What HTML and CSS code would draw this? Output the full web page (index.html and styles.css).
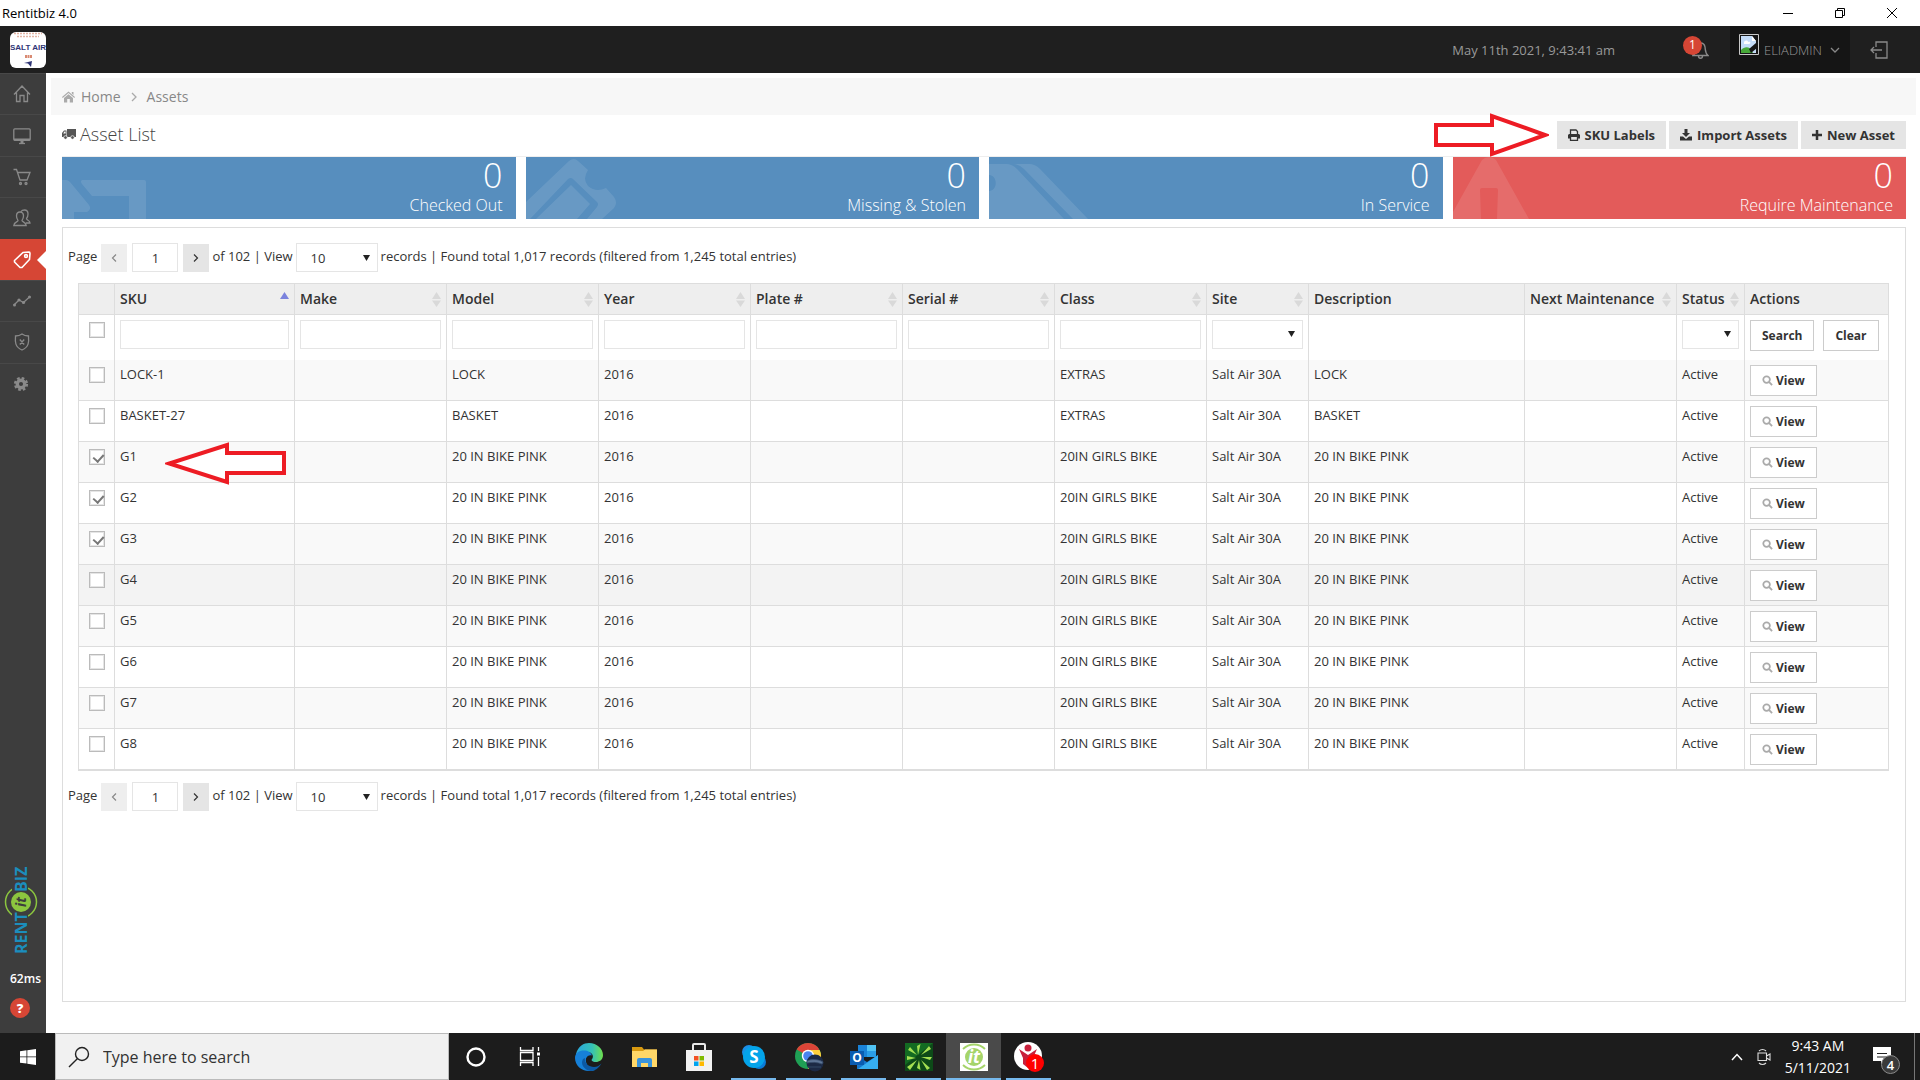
FILE: index.html
```html
<!DOCTYPE html>
<html lang="en">
<head>
  <meta charset="UTF-8">
  <title>Rentitbiz 4.0</title>
  <link rel="stylesheet" href="styles.css">
</head>
<body>
  <svg class="defs" aria-hidden="true">
    <symbol id="i-search" viewBox="0 0 12 12"><circle cx="5" cy="5" r="3.6" fill="none" stroke="#aaa" stroke-width="1.9"/><path d="M7.6 7.6L11 11" stroke="#aaa" stroke-width="2"/></symbol>
    <symbol id="i-sort" viewBox="0 0 9 15"><path d="M4.5 0L9 7H0zM4.5 15L9 8.400H0z" fill="#d9d9d9"/></symbol>
    <symbol id="i-left" viewBox="0 0 8 10"><path d="M6 1.500L2.500 5 6 8.500" fill="none" stroke="#888" stroke-width="1.200"/></symbol>
    <symbol id="i-right" viewBox="0 0 8 10"><path d="M2 1.500L5.500 5 2 8.500" fill="none" stroke="#333" stroke-width="1.200"/></symbol>
  </svg>

  <div class="titlebar">
    <span>Rentitbiz 4.0</span>
    <div class="window-buttons">
      <button aria-label="Minimize"><svg width="12" height="12"><path d="M1 6.500H11" stroke="#000"/></svg></button>
      <button aria-label="Restore"><svg width="12" height="12"><path d="M1.500 3.500H8.500V10.500H1.500zM3.500 3.500V1.500H10.500V8.500H8.500" fill="none" stroke="#000"/></svg></button>
      <button aria-label="Close"><svg width="12" height="12"><path d="M1 1L11 11M11 1L1 11" stroke="#000"/></svg></button>
    </div>
  </div>

  <header class="topbar">
    <a href="#" class="brand" aria-label="Salt Air">
      <svg width="36" height="36" viewBox="0 0 36 36">
        <rect width="36" height="36" rx="6" fill="#fff"/>
        <path d="M4 1.500H32M7 4.500H29" stroke="#e3b4a4" stroke-width="1.500" stroke-dasharray="2 1"/>
        <text x="18" y="18" class="brand-text">SALT AIR</text>
        <path d="M15 24.500H22" stroke="#d98a72" stroke-width="3" stroke-dasharray="2 .5"/>
        <path d="M14 31L22 29 21 35 18 31.500z" fill="#2f3575"/>
      </svg>
    </a>
    <span class="clock">May 11th 2021, 9:43:41 am</span>
    <button class="bell" aria-label="Notifications">
      <svg width="17" height="18" viewBox="0 0 17 18" fill="none" stroke="#8a8a8a" stroke-width="1.400"><path d="M1 14.500C4 12 3.500 9 4 6 4.500 3 6 2 8.500 2S12.500 3 13 6C13.500 9 13 12 16 14.500zM6.500 15c0 3 4 3 4 0"/></svg>
      <span class="badge">1</span>
    </button>
    <button class="user">
      <svg class="avatar" width="20" height="21" viewBox="0 0 20 21"><path d="M.5.5H19.500V20.500H.5z" fill="#151515" stroke="#c8c8c8"/><path d="M2 2H13L17 7V19H2z" fill="#c4dcf8"/><path d="M13 2V7H17z" fill="#fff"/><path d="M5 9c0-3 4-3 4-1 3-1 3 2 1 2H5z" fill="#fff"/><path d="M2 19V16C6 12 11 12 14 19z" fill="#46a838"/><path d="M17 9L10 15 12 19 18 14z" fill="#151515"/></svg>
      <span>ELIADMIN</span>
      <svg width="10" height="6" viewBox="0 0 10 6"><path d="M1 1L5 5 9 1" fill="none" stroke="#888" stroke-width="1.300"/></svg>
    </button>
    <button class="logout" aria-label="Log out">
      <svg width="18" height="18" viewBox="0 0 18 18" fill="none" stroke="#8a8a8a" stroke-width="1.300"><path d="M6 6V1H17V17H6V12M12 9H1M4 6L1 9 4 12"/></svg>
    </button>
  </header>

  <div class="layout">
    <aside class="sidebar">
      <nav class="menu">
        <a href="#" aria-label="Home"><svg width="18" height="18" viewBox="0 0 18 18"><path d="M1 9.500L9 1 17 9.500M3.500 7.500V16.500H7V10.500H11V16.500H14.500V7.500"/></svg></a>
        <a href="#" aria-label="Dashboard"><svg width="18" height="18" viewBox="0 0 18 18"><rect x=".8" y="1.800" width="16.400" height="11.500" rx="1"/><path d="M1 11.500H17V13.500H1zM7.500 13.500H10.500V16.500H7.500z" fill="#8a8a8a" stroke="none"/><path d="M6 16.500H12"/></svg></a>
        <a href="#" aria-label="Orders"><svg width="18" height="18" viewBox="0 0 18 18"><path d="M.5 1.500H3.500L7 12H14L17 4.500H4.500"/><circle cx="7.500" cy="15.500" r="1"/><circle cx="13" cy="15.500" r="1"/></svg></a>
        <a href="#" aria-label="Customers"><svg width="18" height="18" viewBox="0 0 18 18"><path d="M7 3C4 3 3.500 5 3.500 7S4 10 5 11.500C5 13 1 13 .8 16.500H13.200C13 13 9 13 9 11.500 10 10 10.500 9 10.500 7S10 3 7 3zM8 2.500C9 1 10.500 1 11.500 1c3 0 3.500 2 3.500 4s-.5 3.500-1.500 4.500c0 2 3.500 1.500 3.500 4.500H13"/></svg></a>
        <a href="#" class="active" aria-label="Assets"><svg width="18" height="18" viewBox="0 0 18 18"><path d="M10 1.500L16 1C17 1 17 1.500 17 2.500L16.500 8.500 9 16.500H7L1.500 11V9.500z"/><circle cx="13" cy="5" r="1.400"/></svg></a>
        <a href="#" aria-label="Reports"><svg width="18" height="18" viewBox="0 0 18 18"><path d="M1 13L6 8 10.500 10.500 17 4.500"/><g fill="#8a8a8a" stroke="none"><circle cx="1.500" cy="13" r="1.500"/><circle cx="6" cy="8" r="1.600"/><circle cx="10.500" cy="10.500" r="1.600"/><circle cx="16.500" cy="5" r="1.500"/></g></svg></a>
        <a href="#" aria-label="Security"><svg width="18" height="18" viewBox="0 0 18 18"><path d="M9 1C7 2.500 4.500 3 2.500 3C2 9 2 14 9 17C16 14 16 9 15.500 3 13.500 3 11 2.500 9 1zM6.800 6.500L11.200 11.500M11.200 6.500L6.800 11.500"/></svg></a>
        <a href="#" aria-label="Settings"><svg width="16" height="16" viewBox="0 0 18 18"><circle cx="9" cy="9" r="4.200" stroke-width="3.800"/><circle cx="9" cy="9" r="6.700" stroke-width="2.600" stroke-dasharray="2.960 2.300"/></svg></a>
      </nav>
      <div class="sidebar-foot">
        <svg width="36" height="90" viewBox="0 0 36 90">
          <circle cx="17" cy="37" r="15.500" fill="none" stroke="#8cc63f" stroke-width="1.500"/>
          <path d="M8 0H24V90H8z" fill="#3d3d3d"/>
          <text class="logo-word" transform="translate(23 89) rotate(-90)">RENT</text>
          <text class="logo-word" transform="translate(23 27) rotate(-90)">BIZ</text>
          <circle cx="17" cy="37" r="10" fill="#8cc63f"/>
          <text class="logo-it" transform="translate(22 42) rotate(-90)">it</text>
        </svg>
        <span class="ping">62ms</span>
        <button class="help" aria-label="Help">?</button>
      </div>
    </aside>

    <main class="content">
      <nav class="breadcrumb">
        <svg width="13" height="12" viewBox="0 0 13 12" fill="#aaa"><path d="M6.500.5L13 6 12.300 7 6.500 2 .7 7 0 6zM9.800 1H11.500V4L9.800 2.500zM2 7L6.500 3.200 11 7V11.500H7.800V8H5.200V11.500H2z"/></svg>
        <a href="#">Home</a>
        <svg class="crumb-sep" width="6" height="10" viewBox="0 0 6 10"><path d="M1 1L5 5 1 9" fill="none" stroke="#aaa" stroke-width="1.300"/></svg>
        <a href="#">Assets</a>
      </nav>

      <div class="page-head">
        <h1>
          <svg width="14" height="12" viewBox="0 0 14 12" fill="#555"><path d="M5 1H14V9H5zM0 9V5L2 2.500H4.500V9z"/><circle cx="3.500" cy="9.500" r="1.800" stroke="#fff" stroke-width=".7"/><circle cx="10.500" cy="9.500" r="1.800" stroke="#fff" stroke-width=".7"/><path d="M1.200 5.500L2.500 3.600H3.600V5.500z" fill="#fff"/></svg>
          Asset List
        </h1>
        <div class="head-actions">
          <button class="btn-gray"><svg width="12" height="12" viewBox="0 0 12 12"><path d="M2.500 5V1H8L9.500 2.500V5" fill="none" stroke="#333" stroke-width="1.300"/><path d="M1 5H11L12 6V9.500H10V8H2V9.500H0V6z" fill="#333"/><path d="M2.500 8V11.300H9.500V8" fill="none" stroke="#333" stroke-width="1.300"/></svg> SKU Labels</button>
          <button class="btn-gray"><svg width="12" height="12" viewBox="0 0 12 12" fill="#333"><path d="M4.500 0H7.500V4H10L6 8 2 4H4.500zM0 7.500H3L6 10 9 7.500H12V11.500H0z"/></svg> Import Assets</button>
          <button class="btn-gray"><svg width="10" height="12" viewBox="0 0 10 12"><path d="M5 1V11M0 6H10" stroke="#333" stroke-width="2.500"/></svg> New Asset</button>
        </div>
      </div>

      <section class="tiles">
        <div class="tile">
          <svg width="100" height="62"><path d="M0 23H4Q6 23 8 25L27 48Q30 52 25 55H12V62H0zM20 23H82Q84 23 84 25V62H67V39H30L20 27Q18 24 20 23z"/></svg>
          <div class="number">0</div><div class="desc">Checked Out</div>
        </div>
        <div class="tile">
          <svg width="100" height="62"><path fill-rule="evenodd" d="M0 45L43 4Q48 0 52 4L62 13Q56 22 62 29 70 36 80 31L88 40Q92 46 88 51L76 62H0zM4 62H10L45 28 64 47 51 62H61L71 50Q73 47 71 45L47 22Q45 20 42 22z"/></svg>
          <div class="number">0</div><div class="desc">Missing &amp; Stolen</div>
        </div>
        <div class="tile">
          <svg width="100" height="62"><path d="M0 7H17Q23 7 28 12L75 62H0V34C9 34 9 18 0 18zM24 7H40Q46 7 51 12L99 62H84L35 12Q30 7 24 7z"/></svg>
          <div class="number">0</div><div class="desc">In Service</div>
        </div>
        <div class="tile tile-red">
          <svg width="100" height="62"><path fill-rule="evenodd" d="M0 55L29 3Q32 0 36 0T43 3L76 62H0zM29 31Q27 31 27 33L28 62H44L45 33Q45 31 43 31z"/></svg>
          <div class="number">0</div><div class="desc">Require Maintenance</div>
        </div>
      </section>

      <section class="panel">
        <div class="pager">
          <span>Page</span>
          <button class="page-btn prev" disabled aria-label="Previous page"><svg width="8" height="10"><use href="#i-left"/></svg></button>
          <input class="page-no" type="text" value="1" aria-label="Page number">
          <button class="page-btn" aria-label="Next page"><svg width="8" height="10"><use href="#i-right"/></svg></button>
          <span>of 102 | View</span>
          <select class="page-size" aria-label="Records per page"><option>10</option><option>20</option><option>50</option></select>
          <span>records | Found total 1,017 records (filtered from 1,245 total entries)</span>
        </div>

        <table class="grid">
          <colgroup>
            <col class="c-check"><col class="c-sku"><col class="c-std"><col class="c-std"><col class="c-std"><col class="c-std"><col class="c-std"><col class="c-std"><col class="c-site"><col><col class="c-std"><col class="c-status"><col class="c-actions">
          </colgroup>
          <thead>
            <tr>
              <th></th>
              <th><div>SKU <svg width="9" height="15" viewBox="0 0 9 15"><path d="M4.500 0L9 7H0z" fill="#7b83dd"/></svg></div></th>
              <th><div>Make <svg width="9" height="15"><use href="#i-sort"/></svg></div></th>
              <th><div>Model <svg width="9" height="15"><use href="#i-sort"/></svg></div></th>
              <th><div>Year <svg width="9" height="15"><use href="#i-sort"/></svg></div></th>
              <th><div>Plate # <svg width="9" height="15"><use href="#i-sort"/></svg></div></th>
              <th><div>Serial # <svg width="9" height="15"><use href="#i-sort"/></svg></div></th>
              <th><div>Class <svg width="9" height="15"><use href="#i-sort"/></svg></div></th>
              <th><div>Site <svg width="9" height="15"><use href="#i-sort"/></svg></div></th>
              <th><div>Description</div></th>
              <th><div>Next Maintenance <svg width="9" height="15"><use href="#i-sort"/></svg></div></th>
              <th><div>Status <svg width="9" height="15"><use href="#i-sort"/></svg></div></th>
              <th><div>Actions</div></th>
            </tr>
            <tr class="filters">
              <td><input type="checkbox" aria-label="Select all"></td>
              <td><input type="text" aria-label="SKU"></td>
              <td><input type="text" aria-label="Make"></td>
              <td><input type="text" aria-label="Model"></td>
              <td><input type="text" aria-label="Year"></td>
              <td><input type="text" aria-label="Plate #"></td>
              <td><input type="text" aria-label="Serial #"></td>
              <td><input type="text" aria-label="Class"></td>
              <td><select aria-label="Site"><option></option></select></td>
              <td></td>
              <td></td>
              <td><select aria-label="Status"><option></option></select></td>
              <td><div class="filter-actions"><button class="btn-line">Search</button><button class="btn-line">Clear</button></div></td>
            </tr>
          </thead>
          <tbody>
            <tr><td><input type="checkbox" aria-label="LOCK-1"></td><td>LOCK-1</td><td></td><td>LOCK</td><td>2016</td><td></td><td></td><td>EXTRAS</td><td>Salt Air 30A</td><td>LOCK</td><td></td><td>Active</td><td><button class="btn-line"><svg width="11" height="11"><use href="#i-search"/></svg>View</button></td></tr>
            <tr><td><input type="checkbox" aria-label="BASKET-27"></td><td>BASKET-27</td><td></td><td>BASKET</td><td>2016</td><td></td><td></td><td>EXTRAS</td><td>Salt Air 30A</td><td>BASKET</td><td></td><td>Active</td><td><button class="btn-line"><svg width="11" height="11"><use href="#i-search"/></svg>View</button></td></tr>
            <tr><td><input type="checkbox" checked aria-label="G1"></td><td>G1</td><td></td><td>20 IN BIKE PINK</td><td>2016</td><td></td><td></td><td>20IN GIRLS BIKE</td><td>Salt Air 30A</td><td>20 IN BIKE PINK</td><td></td><td>Active</td><td><button class="btn-line"><svg width="11" height="11"><use href="#i-search"/></svg>View</button></td></tr>
            <tr><td><input type="checkbox" checked aria-label="G2"></td><td>G2</td><td></td><td>20 IN BIKE PINK</td><td>2016</td><td></td><td></td><td>20IN GIRLS BIKE</td><td>Salt Air 30A</td><td>20 IN BIKE PINK</td><td></td><td>Active</td><td><button class="btn-line"><svg width="11" height="11"><use href="#i-search"/></svg>View</button></td></tr>
            <tr><td><input type="checkbox" checked aria-label="G3"></td><td>G3</td><td></td><td>20 IN BIKE PINK</td><td>2016</td><td></td><td></td><td>20IN GIRLS BIKE</td><td>Salt Air 30A</td><td>20 IN BIKE PINK</td><td></td><td>Active</td><td><button class="btn-line"><svg width="11" height="11"><use href="#i-search"/></svg>View</button></td></tr>
            <tr class="hover"><td><input type="checkbox" aria-label="G4"></td><td>G4</td><td></td><td>20 IN BIKE PINK</td><td>2016</td><td></td><td></td><td>20IN GIRLS BIKE</td><td>Salt Air 30A</td><td>20 IN BIKE PINK</td><td></td><td>Active</td><td><button class="btn-line"><svg width="11" height="11"><use href="#i-search"/></svg>View</button></td></tr>
            <tr><td><input type="checkbox" aria-label="G5"></td><td>G5</td><td></td><td>20 IN BIKE PINK</td><td>2016</td><td></td><td></td><td>20IN GIRLS BIKE</td><td>Salt Air 30A</td><td>20 IN BIKE PINK</td><td></td><td>Active</td><td><button class="btn-line"><svg width="11" height="11"><use href="#i-search"/></svg>View</button></td></tr>
            <tr><td><input type="checkbox" aria-label="G6"></td><td>G6</td><td></td><td>20 IN BIKE PINK</td><td>2016</td><td></td><td></td><td>20IN GIRLS BIKE</td><td>Salt Air 30A</td><td>20 IN BIKE PINK</td><td></td><td>Active</td><td><button class="btn-line"><svg width="11" height="11"><use href="#i-search"/></svg>View</button></td></tr>
            <tr><td><input type="checkbox" aria-label="G7"></td><td>G7</td><td></td><td>20 IN BIKE PINK</td><td>2016</td><td></td><td></td><td>20IN GIRLS BIKE</td><td>Salt Air 30A</td><td>20 IN BIKE PINK</td><td></td><td>Active</td><td><button class="btn-line"><svg width="11" height="11"><use href="#i-search"/></svg>View</button></td></tr>
            <tr><td><input type="checkbox" aria-label="G8"></td><td>G8</td><td></td><td>20 IN BIKE PINK</td><td>2016</td><td></td><td></td><td>20IN GIRLS BIKE</td><td>Salt Air 30A</td><td>20 IN BIKE PINK</td><td></td><td>Active</td><td><button class="btn-line"><svg width="11" height="11"><use href="#i-search"/></svg>View</button></td></tr>
          </tbody>
        </table>

        <div class="pager">
          <span>Page</span>
          <button class="page-btn prev" disabled aria-label="Previous page"><svg width="8" height="10"><use href="#i-left"/></svg></button>
          <input class="page-no" type="text" value="1" aria-label="Page number">
          <button class="page-btn" aria-label="Next page"><svg width="8" height="10"><use href="#i-right"/></svg></button>
          <span>of 102 | View</span>
          <select class="page-size" aria-label="Records per page"><option>10</option><option>20</option><option>50</option></select>
          <span>records | Found total 1,017 records (filtered from 1,245 total entries)</span>
        </div>
      </section>
    </main>
  </div>

  <footer class="taskbar">
    <button class="start" aria-label="Start"><svg width="16" height="16" viewBox="0 0 16 16" fill="#fff"><path d="M0 2.200L6.500 1.300V7.500H0zM7.300 1.200L16 0V7.500H7.300zM0 8.300H6.500V14.600L0 13.700zM7.300 8.300H16V16L7.300 14.700z"/></svg></button>
    <label class="search">
      <svg width="22" height="22" viewBox="0 0 22 22" fill="none" stroke="#222" stroke-width="1.400"><circle cx="14" cy="8" r="6.500"/><path d="M9.300 12.700L1 21"/></svg>
      <input type="text" placeholder="Type here to search" aria-label="Search">
    </label>
    <div class="apps system">
      <button aria-label="Cortana"><svg width="28" height="28"><circle cx="14" cy="14" r="8.500" fill="none" stroke="#fff" stroke-width="2.400"/></svg></button>
      <button aria-label="Task View"><svg width="28" height="28" fill="none" stroke="#fff" stroke-width="1.300"><path d="M4.500 4V7.500H17V4M4.500 23V19.500H17V23M4.500 9.500H17V17.500H4.500zM22.500 4V8M22.500 14V23"/><path d="M22.500 9.500V12.500" stroke-width="3"/></svg></button>
    </div>
    <div class="apps">
      <button aria-label="Edge"><svg width="28" height="28" viewBox="0 0 28 28">
        <defs><linearGradient id="eg" x1="0" x2="1"><stop offset="0" stop-color="#2aa7dd"/><stop offset=".6" stop-color="#35c1b6"/><stop offset="1" stop-color="#6fe04c"/></linearGradient></defs>
        <path d="M1 11C3 3 9 0 14 0c8 0 14 6 14 12 0 5-4 7-7 7-4 0-5-2-4-3 2-2 1-7-5-7-5 0-9 2-11 7z" fill="url(#eg)"/>
        <path d="M0 15C0 10 4 7.500 9 7.500c4 0 7 2 8 5-2-1-5 0-6 3-1 5 3 11 9 11.500-2 1-4 1-6 1C6 28 0 22 0 15z" fill="#1680d8"/>
        <path d="M10 15c-1 5 4 9 9 9 3 0 5-1 7.500-3.500C24 25 20 28 16 28 9 27 5 21 8 16z" fill="#0c59a4"/></svg></button>
      <button aria-label="File Explorer"><svg width="28" height="28" viewBox="0 0 28 28"><path d="M2 4H12L14 6.500H27V10H2z" fill="#d99a10"/><path d="M2 8H13L15 6.500H27V24H2z" fill="#ffd768"/><path d="M7 24V17Q7 15 9 15H20Q22 15 22 17V24H18V20H11V24z" fill="#3a94dc"/></svg></button>
      <button aria-label="Microsoft Store"><svg width="28" height="28" viewBox="0 0 28 28"><path d="M8 8V2Q8 1 9 1H19Q20 1 20 2V8" fill="none" stroke="#e8e8e8" stroke-width="2"/><path d="M1 7H27V28H1z" fill="#f2f2f2"/><path d="M9 13H13.500V17.500H9z" fill="#f25022"/><path d="M14.500 13H19V17.500H14.500z" fill="#7fba00"/><path d="M9 18.500H13.500V23H9z" fill="#00a4ef"/><path d="M14.500 18.500H19V23H14.500z" fill="#ffb900"/></svg></button>
      <button class="running" aria-label="Skype"><svg width="28" height="28" viewBox="0 0 28 28"><circle cx="9" cy="9" r="7" fill="#1b8fe6"/><circle cx="19" cy="19" r="7" fill="#0a7cd8"/><circle cx="14" cy="14" r="11" fill="#04a4ea"/><text x="14" y="20" class="skype-s">S</text></svg></button>
      <button class="running" aria-label="Chrome"><svg width="30" height="30" viewBox="0 0 30 30"><circle cx="14" cy="14" r="13" fill="#1fa055"/><path d="M14 14L2.700 7.500A13 13 0 0 1 25.300 7.500z" fill="#dc4437"/><path d="M14 14L14 8H25.600A13 13 0 0 1 14 27z" fill="#fdd03c"/><circle cx="14" cy="14" r="6.200" fill="#fff"/><circle cx="14" cy="14" r="4.800" fill="#4a84f0"/><circle cx="21" cy="21" r="8.500" fill="#1c2a45"/><path d="M13 19C17 17 24 17 29 20L28 22C23 20 18 20 13 21zM14 25H27" fill="#5d7596" stroke="#3b506f" stroke-width=".8"/></svg></button>
      <button class="running" aria-label="Outlook"><svg width="28" height="28" viewBox="0 0 28 28"><path d="M8 2H26V14H8z" fill="#1a83d8"/><path d="M17 2H26V8H17z" fill="#50c3f4"/><path d="M17 8H26V14H17z" fill="#2a9ee8"/><path d="M7 13L17 19 28 12V26H7z" fill="#1476cc"/><path d="M28 12V26H8z" fill="#36aef0"/><path d="M0 8H14V22H0z" fill="#0a5cb0"/><text x="7" y="19" class="outlook-o">O</text></svg></button>
      <button class="running" aria-label="Spark"><svg width="28" height="28" viewBox="0 0 28 28"><path d="M0 0H28V28H0z" fill="#0d4a18"/><path d="M0 0H28L0 22z" fill="#136b22"/><path d="M13 12L12 3 15.500 1zM16 12L24 3 26 6zM16 14L27 14 25 17zM16 17L25 25 22 27zM14 17L15.500 27 12 25zM12 17L5 27 2 24zM11 15L2 17V13zM12 12L3 7 5 4z" fill="#a4e052"/></svg></button>
      <button class="running current" aria-label="Rentitbiz"><svg width="28" height="28" viewBox="0 0 28 28"><path d="M0 0H28V28H0z" fill="#fff"/><circle cx="14" cy="14" r="9" fill="#a5d46a"/><path d="M3 6C9 0 19 0 25 6M3 22C9 28 19 28 25 22" fill="none" stroke="#a5d46a" stroke-width="1.800"/><text x="14" y="20" class="rent-it">it</text></svg></button>
      <button class="running" aria-label="Contacts"><svg width="32" height="30" viewBox="0 0 32 30"><circle cx="15" cy="14" r="14" fill="#fff"/><circle cx="15" cy="6" r="3.500" fill="#c8203c"/><path d="M6 7L15 13 24 7 20 16V24L15 26 10 22V16z" fill="#c8203c"/><circle cx="22" cy="21" r="9" fill="#f00"/><text x="22" y="27" class="count">1</text></svg></button>
    </div>
    <div class="tray">
      <svg width="12" height="8" viewBox="0 0 12 8"><path d="M1 7L6 1.500 11 7" fill="none" stroke="#fff" stroke-width="1.500"/></svg>
      <svg width="14" height="18" viewBox="0 0 14 18" fill="none" stroke="#ddd" stroke-width="1.100"><path d="M1 5H9.500V12.500H1zM9.500 8L13 6V12L9.500 10M2 3C4 1 7 1 9 3M2 15C4 17 7 17 9 15"/></svg>
      <div class="time"><span>9:43 AM</span><span>5/11/2021</span></div>
      <svg class="notes" width="28" height="28" viewBox="0 0 28 28"><path d="M0 0H18V14H11L8 17V14H0z" fill="#fff"/><path d="M4 6.500H14M4 10H14" stroke="#222"/><circle cx="17.500" cy="17.500" r="9" fill="#3a3a3a" stroke="#8a8a8a"/><text x="17.500" y="22.500" class="note-count">4</text></svg>
    </div>
  </footer>

  <svg class="arrow arrow-labels" width="116" height="44"><path d="M3 12H59V3L112 22 59 41V32H3z"/></svg>
  <svg class="arrow arrow-rows" width="122" height="44"><path d="M119 11H62V3L4 21.500 62 40V31H119z"/></svg>
</body>
</html>
```
FILE: styles.css
```css
* {
  box-sizing: border-box;
}

body {
  margin: 0;
  min-height: 100vh;
  display: flex;
  flex-direction: column;
  font-family: "Open Sans", sans-serif;
  font-size: 13px;
  color: #333;
  background-color: #fff;
}

button, input, select {
  font-family: inherit;
  font-size: inherit;
  color: inherit;
}

button {
  border: none;
  background: none;
  padding: 0;
  cursor: pointer;
}

a {
  color: inherit;
  text-decoration: none;
}

svg {
  display: block;
  flex: none;
}

.defs {
  position: absolute;
  width: 0;
  height: 0;
}

/* window title */
.titlebar {
  height: 26px;
  display: flex;
  align-items: center;
  justify-content: space-between;
  padding-left: 2px;
  color: #000;
}

.window-buttons {
  display: flex;
  margin-right: 2px;
}

.window-buttons button {
  width: 52px;
  display: flex;
  justify-content: center;
}

/* top bar */
.topbar {
  height: 47px;
  background-color: #1f1f1f;
  display: flex;
  align-items: center;
  padding-left: 10px;
  color: #999;
}

.brand {
  margin-right: auto;
}

.brand-text {
  font-family: "Liberation Sans Narrow", "Liberation Sans", sans-serif;
  font-size: 8px;
  font-weight: 700;
  text-anchor: middle;
  fill: #2f3575;
}

.clock {
  margin-right: 77px;
}

.bell {
  position: relative;
  width: 38px;
  height: 47px;
  display: flex;
  align-items: center;
}

.badge {
  position: absolute;
  left: -9px;
  top: 10px;
  width: 19px;
  height: 19px;
  line-height: 18px;
  border-radius: 50%;
  background-color: #d64635;
  color: #fff;
  font-size: 12px;
}

.user {
  height: 47px;
  width: 120px;
  padding: 0 10px 0 9px;
  display: flex;
  align-items: center;
  gap: 5px;
  background-color: #151515;
  color: #999;
  font-weight: 300;
}

.user svg:last-child {
  margin-left: auto;
}

.avatar {
  margin-bottom: 10px;
}

.logout {
  width: 70px;
  padding-left: 20px;
}

.layout {
  flex: 1;
  display: flex;
}

/* sidebar */
.sidebar {
  width: 46px;
  background-color: #3d3d3d;
  display: flex;
  flex-direction: column;
  justify-content: space-between;
}

.menu {
  height: 331px;
  display: flex;
  flex-direction: column;
}

.menu a {
  flex: 1;
  position: relative;
  display: flex;
  align-items: center;
  padding-left: 13px;
  border-top: 1px solid #484848;
}

.menu svg {
  fill: none;
  stroke: #8a8a8a;
  stroke-width: 1.3;
}

.menu .active {
  background-color: #d64635;
  border-top-color: #d64635;
}

.menu .active svg {
  stroke: #fff;
  stroke-width: 1.6;
}

.menu .active::after {
  content: "";
  position: absolute;
  right: 0;
  top: 11px;
  border: 9px solid transparent;
  border-left: none;
  border-right: 9px solid #fff;
}

.sidebar-foot {
  display: flex;
  flex-direction: column;
  align-items: flex-start;
  padding: 0 0 15px 4px;
}

.logo-word {
  font: 700 16px "Open Sans", sans-serif;
  fill: #1b8ebd;
}

.logo-it {
  font: italic 700 14px "Open Sans", sans-serif;
  fill: #3d3d3d;
}

.ping {
  margin: 15px 0 10px 6px;
  line-height: 18px;
  font-size: 12px;
  font-weight: 600;
  color: #fff;
}

.help {
  width: 20px;
  height: 20px;
  margin-left: 6px;
  border-radius: 50%;
  background-color: #d64635;
  color: #fff;
  font-weight: 800;
  line-height: 20px;
}

/* content */
.content {
  flex: 1;
  min-width: 0;
  display: flex;
  flex-direction: column;
  padding: 5px 14px 31px 16px;
}

.breadcrumb {
  height: 37px;
  margin: 0 -10px 0 -11px;
  padding-left: 11px;
  display: flex;
  align-items: center;
  gap: 6px;
  background-color: #f7f7f7;
  color: #888;
  font-size: 14px;
}

.crumb-sep {
  margin: 0 4px;
}

.page-head {
  height: 42px;
  padding-bottom: 2px;
  display: flex;
  align-items: center;
  justify-content: space-between;
  border-bottom: 1px solid #eee;
}

h1 {
  margin: 0;
  padding-bottom: 1px;
  display: flex;
  align-items: center;
  gap: 4px;
  font-size: 18px;
  font-weight: 300;
  color: #444;
}

.head-actions {
  display: flex;
  gap: 3px;
}

.btn-gray {
  height: 28px;
  padding: 0 11px;
  display: flex;
  align-items: center;
  gap: 5px;
  background-color: #e5e5e5;
  font-weight: 700;
}

.tiles {
  display: grid;
  grid-template-columns: repeat(4, 1fr);
  gap: 10px;
}

.tile {
  position: relative;
  height: 62px;
  padding-right: 13px;
  background-color: #578ebe;
  color: #fff;
  text-align: right;
  font-weight: 300;
}

.tile-red {
  background-color: #e35b5a;
}

.tile svg {
  position: absolute;
  left: 0;
  top: 0;
  fill: #fff;
  opacity: 0.1;
}

.tile .number {
  font-size: 34px;
  line-height: 36px;
}

.tile .desc {
  font-size: 16px;
  line-height: 24px;
}

.panel {
  flex: 1;
  margin-top: 8px;
  border: 1px solid #ddd;
  padding: 0 16px 0 15px;
}

.pager {
  display: flex;
  align-items: center;
  height: 29px;
  margin: 15px 0 11px -10px;
  gap: 3px;
}

.grid + .pager {
  margin-top: 11px;
}

.pager span {
  padding-bottom: 3px;
}

.page-btn {
  width: 26px;
  height: 28px;
  display: flex;
  align-items: center;
  justify-content: center;
  background-color: #e5e5e5;
}

.page-btn.prev {
  margin-left: 1px;
  background-color: #eee;
}

input[type="text"], select {
  height: 29px;
  border: 1px solid #e5e5e5;
  border-radius: 0;
  background-color: #fff;
  padding: 0 10px;
}

select {
  appearance: none;
  background: #fff url("data:image/svg+xml,%3Csvg xmlns='http://www.w3.org/2000/svg' width='7' height='6'%3E%3Cpath d='M0 0h7L3.500 6z' fill='%23222'/%3E%3C/svg%3E") no-repeat right 7px center;
}

.pager .page-no {
  width: 46px;
  margin: 0 2px;
  text-align: center;
}

.page-size {
  width: 82px;
}

.pager .page-size {
  padding-left: 14px;
}

/* asset table */
.grid {
  width: 100%;
  table-layout: fixed;
  border-spacing: 0;
  border: 1px solid #ddd;
  border-right: none;
}

.c-check { width: 36px; }
.c-sku { width: 180px; }
.c-std { width: 152px; }
.c-site { width: 102px; }
.c-status { width: 68px; }
.c-actions { width: 144px; }

.grid th, .grid td {
  border-right: 1px solid #ddd;
  border-bottom: 1px solid #ddd;
  padding: 5px;
  text-align: left;
  vertical-align: top;
  white-space: nowrap;
}

.grid th {
  height: 31px;
  background-color: #eee;
  font-size: 14px;
  font-weight: 600;
}

.grid th div {
  display: flex;
  align-items: center;
  justify-content: space-between;
  line-height: 20px;
}

.grid .filters td {
  height: 45px;
  border-bottom: none;
}

.grid tbody td {
  height: 41px;
  line-height: 19px;
  font-size: 13px;
}

.grid tbody td:last-child, .grid tbody td:first-child {
  padding-bottom: 0;
}

.grid tbody tr:nth-child(odd) td {
  background-color: #f9f9f9;
}

.grid tbody .hover td {
  background-color: #f3f3f3;
}

.grid td input[type="text"], .grid td select {
  display: block;
  width: 100%;
}

.grid td select {
  background-position: right 7px top 10px;
}

input[type="checkbox"] {
  appearance: none;
  display: block;
  position: relative;
  width: 16px;
  height: 16px;
  margin: 2px 0 0 5px;
  border: 1px solid #bbb;
  background-color: #fff;
  box-shadow: inset 0 0 0 1px #e5e5e5;
}

input[type="checkbox"]:checked::after {
  content: "";
  position: absolute;
  left: 5px;
  top: 2px;
  width: 5px;
  height: 8px;
  border: solid #777;
  border-width: 0 2px 2px 0;
  transform: rotate(42deg);
}

.filter-actions {
  display: flex;
  gap: 9px;
}

.btn-line {
  height: 31px;
  padding: 0 11px;
  display: flex;
  align-items: center;
  gap: 3px;
  border: 1px solid #ccc;
  background-color: #fff;
  font-size: 12px;
  font-weight: 700;
}

/* taskbar */
.taskbar {
  height: 47px;
  display: flex;
  background-color: #1c1c1c;
  color: #fff;
}

.start {
  width: 55px;
  display: flex;
  align-items: center;
  justify-content: center;
}

.search {
  width: 394px;
  display: flex;
  align-items: center;
  gap: 13px;
  padding-left: 12px;
  background-color: #f1f1f1;
  border: 1px solid #bbb;
}

.search input[type="text"] {
  flex: 1;
  min-width: 0;
  border: none;
  padding: 0;
  background: none;
  font-size: 16px;
}

.search input::placeholder {
  color: #333;
}

.apps {
  display: flex;
}

.system {
  margin-right: 4px;
}

.apps button {
  position: relative;
  width: 55px;
  display: flex;
  align-items: center;
  justify-content: center;
}

.apps.system button {
  width: 54px;
}

.running::after {
  content: "";
  position: absolute;
  left: 5px;
  right: 5px;
  bottom: 0;
  height: 2px;
  background-color: #76b9ed;
}

.apps .current {
  background-color: #4a4a4a;
}

.current::after {
  left: 0;
  right: 0;
}

.apps text, .notes text {
  text-anchor: middle;
  fill: #fff;
  font-family: "Open Sans", sans-serif;
}

.skype-s {
  font-size: 17px;
  font-weight: 700;
}

.outlook-o {
  font-size: 12px;
  font-weight: 700;
}

.rent-it {
  font-size: 17px;
  font-style: italic;
  font-weight: 700;
}

.count {
  font-size: 15px;
}

.note-count {
  font-size: 13px;
  font-weight: 600;
}

.tray {
  margin-left: auto;
  margin-right: 5px;
  padding-right: 13px;
  display: flex;
  align-items: center;
  gap: 14px;
  border-right: 1px solid #777;
}

.time {
  display: flex;
  flex-direction: column;
  text-align: center;
  font-size: 14px;
  line-height: 22px;
}

.notes {
  margin-left: 8px;
  margin-top: 8px;
}

/* red marker arrows over the page */
.arrow {
  position: absolute;
  fill: #fff;
  stroke: #ed1c24;
  stroke-width: 4;
}

.arrow-labels {
  right: 371px;
  top: 113px;
}

.arrow-rows {
  left: 165px;
  top: 442px;
}
```
